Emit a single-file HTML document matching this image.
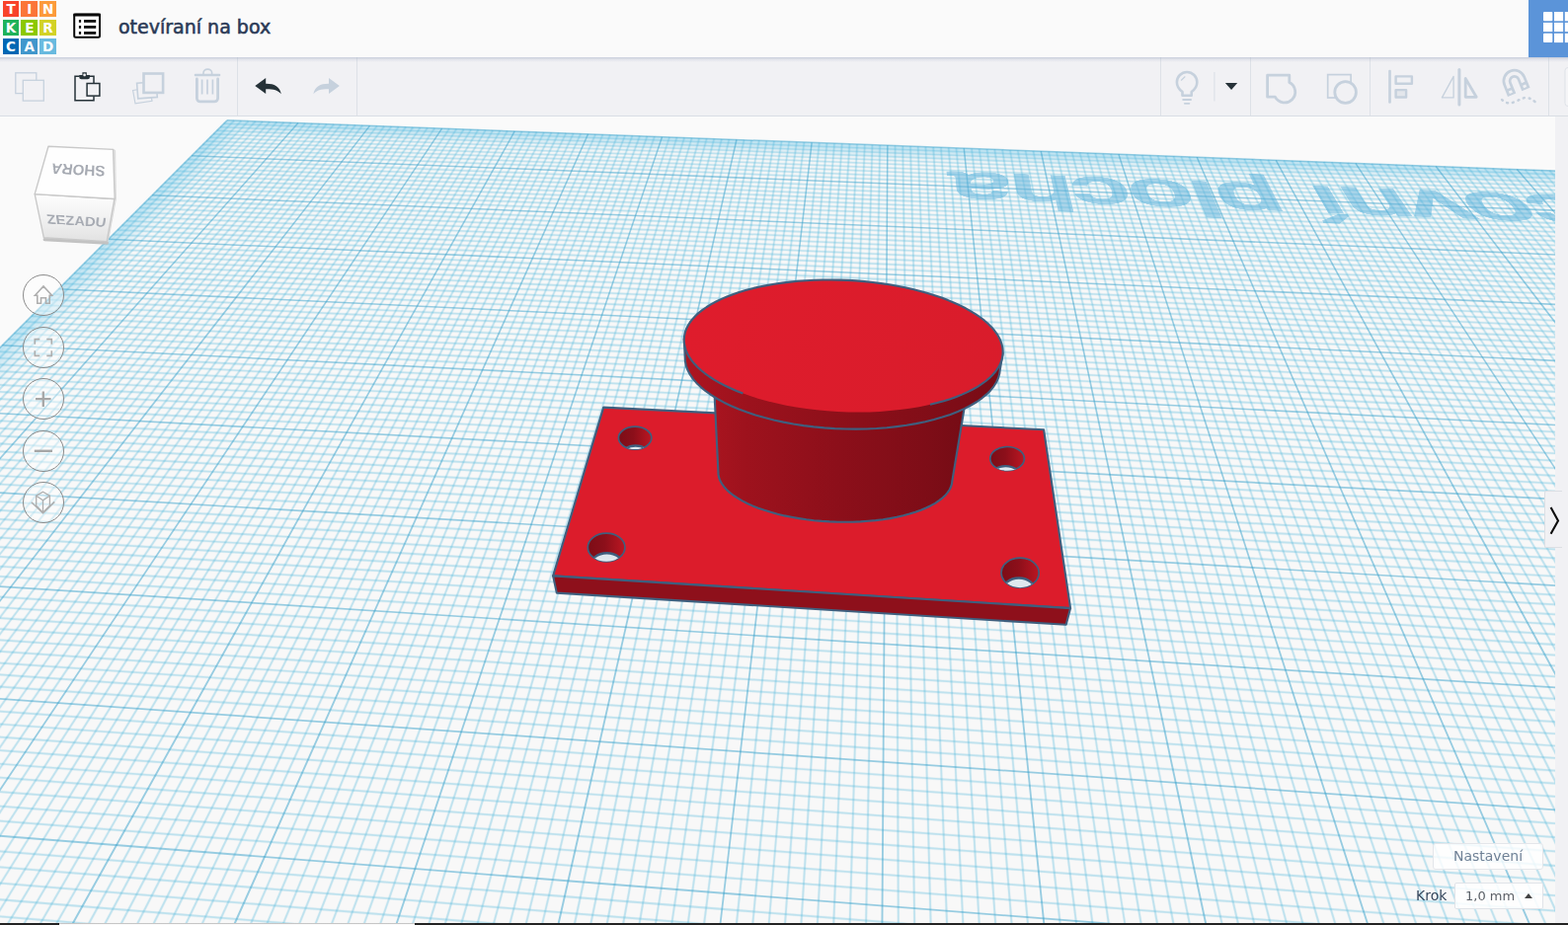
<!DOCTYPE html>
<html lang="cs">
<head>
<meta charset="utf-8">
<title>otevíraní na box</title>
<style>
*{box-sizing:border-box;margin:0;padding:0}
html,body{width:1588px;height:937px;overflow:hidden;background:#fafafa;font-family:"DejaVu Sans","Liberation Sans",sans-serif}
#app{position:relative;width:1588px;height:937px;overflow:hidden;background:#fafafa}
#hdr{position:absolute;left:0;top:0;width:1588px;height:58px;background:#fafafa;z-index:5}
#hdrshadow{position:absolute;left:0;top:58px;width:1588px;height:5px;background:linear-gradient(rgba(160,170,195,.5),rgba(170,180,200,.2) 45%,rgba(190,195,210,0));z-index:6}
#logo{position:absolute;left:3px;top:1px;width:54px;height:54px}
#logo b{position:absolute;width:16.4px;height:16.4px;color:#fff;font:bold 13.5px/16.4px "DejaVu Sans","Liberation Sans",sans-serif;text-align:center}
#title{position:absolute;left:120px;top:15px;font-size:19px;line-height:24px;color:#2b3a56;white-space:nowrap;-webkit-text-stroke:.55px #2b3a56}
#apps{position:absolute;left:1548px;top:0;width:40px;height:58px;background:#5b94d9}
#tb{position:absolute;left:0;top:58px;width:1588px;height:60px;background:#f1f1f4;border-bottom:1px solid #d9dee4;z-index:4}
.sep{position:absolute;top:0;width:1px;height:59px;background:#dde1e7}
#cv{position:absolute;left:0;top:118px;width:1575px;height:817px;background:#fafafa;overflow:hidden}
#rstrip{position:absolute;left:1575px;top:118px;width:13px;height:817px;background:#f1f1f4}
#bot{position:absolute;left:0;top:935px;width:1588px;height:2px;background:#232323}
#bot i{position:absolute;left:60px;top:0;width:360px;height:2px;background:linear-gradient(#c2c2c2 0,#c9c9c9 50%,#fafafa 50%,#fafafa 100%)}
svg{position:absolute;left:0;top:0;overflow:visible}
.nav{position:absolute;left:22.800px;width:42px;height:42px;border-radius:50%;border:1.2px solid #8a8a8a;background:rgba(255,255,255,.4)}
#set{position:absolute;left:1451px;top:854px;width:112px;height:27px;border:1px solid #e4e6ea;border-radius:3px;background:rgba(255,255,255,.8);color:#6f8196;font-size:14px;line-height:24px;text-align:center}
#krok{position:absolute;left:1434px;top:898px;font-size:14px;line-height:18px;color:#34465c}
#step{position:absolute;left:1473px;top:894px;width:90px;height:27px;border:1px solid #e0e3e8;border-radius:2px;background:rgba(255,255,255,.85);color:#5a6470;font-size:13px;line-height:25px;padding-left:10px;color:#5b6067}
#step i{position:absolute;left:70px;top:10px;width:0;height:0;border-left:4.5px solid transparent;border-right:4.5px solid transparent;border-bottom:5px solid #444}
#tab{position:absolute;left:1564px;top:497px;width:18px;height:58px;background:#f1f1f4;border:1px solid #dcdfe4;border-right:none;border-radius:2px 0 0 2px;z-index:3}
#wp{position:absolute;left:0;top:-118px;transform-origin:0 0;font:normal 100px/100px "Liberation Sans",sans-serif;color:#5fb3da;-webkit-text-stroke:4.6px #58b0da;opacity:.5;white-space:nowrap}
.cubetx{position:absolute;left:0;top:0;width:100px;height:100px;transform-origin:0 0;pointer-events:none}
.cubetx span{position:absolute;display:block;width:200px;margin-left:-100px;height:40px;margin-top:-20px;text-align:center;font:bold 31px/40px "Liberation Sans",sans-serif;color:#a6aab2;transform:scaleX(.67);white-space:nowrap}
</style>
</head>
<body>
<div id="app">
<div id="hdr">
  <div id="logo">
    <b style="left:0px;top:0.1px;width:16.1px;height:16.1px;line-height:16.1px;background:#f8432b">T</b><b style="left:18.4px;top:0.1px;width:16.8px;height:16.1px;line-height:16.1px;background:#fb7539">I</b><b style="left:37.3px;top:0.1px;width:16.5px;height:16.1px;line-height:16.1px;background:#fc9a3b">N</b>
    <b style="left:0px;top:18.8px;width:16.1px;height:16.5px;line-height:16.5px;background:#1fb25a">K</b><b style="left:18.4px;top:18.8px;width:16.8px;height:16.5px;line-height:16.5px;background:#8cc800">E</b><b style="left:37.3px;top:18.8px;width:16.5px;height:16.5px;line-height:16.5px;background:#d2d226">R</b>
    <b style="left:0px;top:37.5px;width:16.1px;height:16.2px;line-height:16.2px;background:#0067b4">C</b><b style="left:18.4px;top:37.5px;width:16.8px;height:16.2px;line-height:16.2px;background:#4197cc">A</b><b style="left:37.3px;top:37.5px;width:16.5px;height:16.2px;line-height:16.2px;background:#69badf">D</b>
  </div>
  <svg id="listico" width="40" height="40" viewBox="70 8 40 40" style="left:70px;top:8px">
    <rect x="75.2" y="14.8" width="25.8" height="23" rx="1.5" fill="#fcfcfc" stroke="#0a0a0a" stroke-width="2"/>
    <rect x="74.2" y="13.6" width="27.8" height="3" rx="1" fill="#0a0a0a"/>
    <g fill="#0a0a0a">
      <rect x="79.9" y="20" width="2.2" height="2.8"/><rect x="85" y="20" width="12.2" height="2.8"/>
      <rect x="79.9" y="26" width="2.2" height="2.8"/><rect x="85" y="26" width="12.2" height="2.8"/>
      <rect x="79.9" y="32" width="2.2" height="2.8"/><rect x="85" y="32" width="12.2" height="2.8"/>
    </g>
  </svg>
  <div id="title">otevíraní na box</div>
  <div id="apps">
    <svg width="40" height="58" viewBox="1548 0 40 58">
      <g fill="#fff">
        <rect x="1563" y="12" width="9.3" height="9.3" rx="1"/><rect x="1574" y="12" width="9.1" height="9.3"/><rect x="1584.8" y="12" width="9" height="9.3"/>
        <rect x="1563" y="22.9" width="9.3" height="9.2"/><rect x="1574" y="22.9" width="9.1" height="9.2"/><rect x="1584.8" y="22.9" width="9" height="9.2"/>
        <rect x="1563" y="33.8" width="9.3" height="9.3" rx="1"/><rect x="1574" y="33.8" width="9.1" height="9.3"/><rect x="1584.8" y="33.8" width="9" height="9.3"/>
      </g>
    </svg>
  </div>
</div>
<div id="hdrshadow"></div>
<div id="tb">
  <i class="sep" style="left:240px"></i><i class="sep" style="left:361px"></i>
  <i class="sep" style="left:1175px"></i><i class="sep" style="left:1266px"></i><i class="sep" style="left:1387px"></i><i class="sep" style="left:1568px"></i>
  <svg id="tbico" width="1588" height="60" viewBox="0 58 1588 60">
    <!-- copy (disabled) -->
    <g fill="#f1f1f4" stroke="#c6d1dd" stroke-width="1.3">
      <rect x="15.8" y="73.8" width="21" height="20.8"/>
      <rect x="23.3" y="81.3" width="21" height="20.8"/>
    </g>
    <!-- paste -->
    <g fill="none" stroke="#263238" stroke-width="1.5">
      <path d="M80.5,77.2H76v24.6h19v-4.5M95,84V77.2H90.5"/>
      <path d="M80.200,76h3.200v-2.800h4.400v2.800h3.200v2q0,2.200 -2.200,2.200h-6.400q-2.200,0 -2.200,-2.200z" fill="#263238" stroke="none"/>
      <rect x="84.400" y="74.600" width="2.400" height="2.600" rx=".6" fill="#f1f1f4" stroke="none"/>
      <rect x="88.1" y="84.5" width="12.8" height="12.6" fill="#f1f1f4"/>
    </g>
    <!-- duplicate (disabled) -->
    <g fill="#f1f1f4" stroke="#c6d1dd">
      <path d="M134.6,91.5l17,-2.6l2.4,13.4l-17,2.6z" stroke-width="1.2"/>
      <path d="M138.6,84.3l19.5,-1.5l1.2,15.6l-19.5,1.5z" stroke-width="1.6"/>
      <rect x="145.5" y="74.5" width="19.6" height="19.4" stroke-width="2.6"/>
    </g>
    <!-- trash (disabled) -->
    <g fill="none" stroke="#c6d1dd" stroke-linecap="round">
      <path d="M198,76h24" stroke-width="2.6"/>
      <path d="M206,75v-1.2a4,3.4 0 0 1 8.6,0V75" stroke-width="1.6"/>
      <path d="M199.4,80v19.5a3.4,3.4 0 0 0 3.4,3.4h14.4a3.4,3.4 0 0 0 3.4,-3.4V80" stroke-width="2.8"/>
      <path d="M204.6,80.6v14.8M210,80.6v14.8M215.4,80.6v14.8" stroke-width="1.7" stroke-linecap="butt"/>
    </g>
    <!-- undo -->
    <path d="M258.300,87.100L269.200,79v5.700c8.500,-.1 14.300,2.800 15.600,10.600c-3.200,-4 -8,-5.200 -15.600,-5.100v4.900z" fill="#263238"/>
    <!-- redo (disabled) -->
    <path d="M343.900,87.100L333,79v5.700c-8.500,-.1 -14.300,2.800 -15.600,10.600c3.200,-4 8,-5.200 15.600,-5.100v4.900z" fill="#c6d1dd"/>
    <!-- bulb -->
    <g fill="none" stroke="#c6d1dd" stroke-linecap="round">
      <path d="M1197.5,96.8v-3.8c-3.6,-2.6 -5.6,-5.8 -5.6,-9.8a10.2,10.2 0 0 1 20.4,0c0,4 -2,7.200 -5.600,9.800v3.800z" stroke-width="2.6" stroke-linejoin="round"/>
      <path d="M1198.3,101h7.600" stroke-width="2.2"/>
      <path d="M1199.8,104.800h4.600" stroke-width="1.8"/>
      <path d="M1196.4,81.2l3.6,-3.4" stroke-width="1.2"/>
    </g>
    <rect x="1229.300" y="73" width="1.2" height="29.500" fill="#dde1e7"/>
    <path d="M1240.9,84.100h12.300l-6.150,7z" fill="#263238"/>
    <!-- group -->
    <path d="M1283.600,76.200H1305.800V83.500A10.800,10.800 0 1 1 1291.400,98.200H1283.600Z" fill="none" stroke="#c6d1dd" stroke-width="2.8" stroke-linejoin="round"/>
    <!-- ungroup -->
    <rect x="1344.700" y="75.600" width="23.400" height="23.400" fill="none" stroke="#c6d1dd" stroke-width="1.7"/>
    <circle cx="1362.600" cy="93.500" r="10.800" fill="#f1f1f4" stroke="#c6d1dd" stroke-width="2.800"/>
    <!-- align -->
    <g stroke="#c6d1dd" fill="none">
      <path d="M1407.500,72v31.500" stroke-width="2.6" stroke-linecap="round"/>
      <rect x="1413.600" y="77.400" width="16.300" height="7.400" stroke-width="2.400" stroke-linejoin="round"/>
      <rect x="1413.600" y="91.100" width="10.500" height="7.400" stroke-width="2.400" fill="#e3e6eb" stroke-linejoin="round"/>
    </g>
    <!-- mirror -->
    <g stroke="#c6d1dd" fill="none" stroke-linejoin="round">
      <path d="M1477.900,70.500v35.500" stroke-width="3" stroke-linecap="round"/>
      <path d="M1460.400,98.900h11.700v-21.500z" stroke-width="1.300"/>
      <path d="M1484.200,79.500v18.800h11z" stroke-width="2.800"/>
    </g>
    <!-- magnet -->
    <g transform="translate(1533.7,82.05) rotate(-22)" fill="none" stroke-linecap="butt">
      <path d="M-7.7,12.2V0A7.7,7.7 0 0 1 7.7,0V12.2" stroke="#c6d1dd" stroke-width="8.9"/>
      <path d="M-7.7,4.7V0A7.7,7.7 0 0 1 7.7,0V4.7" stroke="#f1f1f4" stroke-width="3.5"/>
      <path d="M-7.7,7.4V10.2M7.7,7.4V10.2" stroke="#f1f1f4" stroke-width="3.3"/>
    </g>
    <path d="M1521.1,101C1525,105 1529,105.2 1534,103.2S1543,98.4 1546.500,99S1551.500,100.800 1554.600,103" fill="none" stroke="#c6d1dd" stroke-width="2.500" stroke-dasharray="1 4.900" stroke-linecap="round"/>
    <rect x="1585" y="68.500" width="12" height="39" rx="3" fill="#f5f5f7" stroke="#dde1e7" stroke-width="1"/>
  </svg>
</div>
<div id="cv">
<svg id="grid" width="1575" height="817" viewBox="0 118 1575 817">
<path d="M230.0,121.9L1786.6,181.1L3332.4,1465.6L-723.8,1076.8Z" fill="#f8f8f8"/>
<g fill="#5cc0e8"><path d="M230.0,121.9L232.0,123.8L-715.1,1077.6L-723.8,1076.8ZM230.0,121.9L1786.6,181.1L1789.2,183.2L232.0,123.8Z" fill-opacity="0.386"/><path d="M232.0,123.8L234.0,125.7L-706.5,1078.4L-715.1,1077.6ZM232.0,123.8L1789.2,183.2L1791.7,185.4L234.0,125.7Z" fill-opacity="0.321"/><path d="M234.0,125.7L236.0,127.7L-697.9,1079.2L-706.5,1078.4ZM234.0,125.7L1791.7,185.4L1794.3,187.5L236.0,127.7Z" fill-opacity="0.258"/><path d="M236.0,127.7L238.0,129.7L-689.2,1080.1L-697.9,1079.2ZM236.0,127.7L1794.3,187.5L1796.9,189.7L238.0,129.7Z" fill-opacity="0.199"/><path d="M238.0,129.7L240.0,131.7L-680.6,1080.9L-689.2,1080.1ZM238.0,129.7L1796.9,189.7L1799.5,191.8L240.0,131.7Z" fill-opacity="0.143"/><path d="M240.0,131.7L242.1,133.7L-671.9,1081.7L-680.6,1080.9ZM240.0,131.7L1799.5,191.8L1802.1,194.0L242.1,133.7Z" fill-opacity="0.093"/><path d="M242.1,133.7L244.1,135.7L-663.3,1082.6L-671.9,1081.7ZM242.1,133.7L1802.1,194.0L1804.8,196.2L244.1,135.7Z" fill-opacity="0.048"/><path d="M244.1,135.7L246.2,137.7L-654.6,1083.4L-663.3,1082.6ZM244.1,135.7L1804.8,196.2L1807.4,198.4L246.2,137.7Z" fill-opacity="0.011"/></g>
<g fill="#4fb8dc" fill-opacity=".08">
<path d="M236.1,121.1L-566.8,933.9L-708.4,1077.3L-706.3,1079.4L-564.7,936.1L238.2,123.2ZM243.3,121.4L-550.4,934.0L-692.0,1078.9L-689.8,1081.0L-548.3,936.0L245.4,123.5ZM250.4,121.6L-534.0,934.0L-675.5,1080.4L-673.3,1082.5L-531.9,936.0L252.6,123.7ZM257.6,121.9L-517.6,934.0L-659.0,1082.0L-656.8,1084.1L-515.5,936.0L259.8,124.0ZM264.8,122.2L-501.2,934.0L-642.4,1083.6L-640.3,1085.7L-499.0,936.0L267.0,124.3ZM272.0,122.5L-484.8,934.0L-625.9,1085.2L-623.7,1087.3L-482.6,936.0L274.2,124.5ZM279.2,122.8L-468.4,934.0L-609.3,1086.8L-607.1,1088.9L-466.2,936.0L281.4,124.8ZM286.4,123.0L-452.0,934.0L-592.6,1088.4L-590.4,1090.4L-449.8,936.0L288.6,125.1ZM293.6,123.3L-435.6,934.0L-576.0,1090.0L-573.7,1092.0L-433.4,936.0L295.9,125.3ZM308.1,123.9L-402.8,934.0L-542.6,1093.2L-540.3,1095.2L-400.6,936.0L310.3,125.9ZM315.3,124.2L-386.4,934.0L-525.8,1094.9L-523.5,1096.8L-384.2,936.0L317.5,126.1ZM322.5,124.4L-370.0,934.0L-509.0,1096.5L-506.7,1098.4L-367.7,936.0L324.8,126.4ZM329.8,124.7L-353.6,934.0L-492.2,1098.1L-489.9,1100.0L-351.3,936.0L332.0,126.7ZM337.0,125.0L-337.2,934.0L-475.3,1099.7L-473.0,1101.6L-334.9,936.0L339.3,126.9ZM344.2,125.3L-320.8,934.0L-458.4,1101.4L-456.1,1103.3L-318.5,936.0L346.6,127.2ZM351.5,125.6L-304.4,934.1L-441.5,1103.0L-439.2,1104.9L-302.1,935.9L353.8,127.5ZM358.8,125.9L-288.0,934.1L-424.5,1104.6L-422.2,1106.5L-285.7,935.9L361.1,127.7ZM366.0,126.2L-271.6,934.1L-407.5,1106.3L-405.2,1108.1L-269.3,935.9L368.4,128.0ZM380.6,126.7L-238.8,934.1L-373.5,1109.5L-371.1,1111.4L-236.5,935.9L383.0,128.5ZM387.9,127.0L-222.5,934.1L-356.4,1111.2L-354.0,1113.0L-220.1,935.9L390.3,128.8ZM395.2,127.3L-206.1,934.1L-339.2,1112.8L-336.8,1114.6L-203.6,935.9L397.6,129.1ZM402.4,127.6L-189.7,934.1L-322.1,1114.5L-319.7,1116.3L-187.2,935.9L404.9,129.4ZM409.7,127.9L-173.3,934.1L-304.9,1116.2L-302.5,1117.9L-170.8,935.9L412.2,129.6ZM417.1,128.2L-156.9,934.1L-287.7,1117.8L-285.2,1119.6L-154.4,935.9L419.5,129.9ZM424.4,128.4L-140.5,934.1L-270.4,1119.5L-268.0,1121.2L-138.0,935.9L426.8,130.2ZM431.7,128.7L-124.1,934.1L-253.1,1121.1L-250.6,1122.8L-121.6,935.9L434.2,130.4ZM439.0,129.0L-107.7,934.2L-235.8,1122.8L-233.3,1124.5L-105.2,935.8L441.5,130.7ZM453.7,129.6L-74.9,934.2L-201.0,1126.2L-198.5,1127.8L-72.4,935.8L456.2,131.2ZM461.0,129.9L-58.5,934.2L-183.6,1127.8L-181.1,1129.5L-56.0,935.8L463.5,131.5ZM468.4,130.2L-42.1,934.2L-166.1,1129.5L-163.6,1131.1L-39.6,935.8L470.9,131.8ZM475.7,130.5L-25.7,934.2L-148.6,1131.2L-146.1,1132.8L-23.2,935.8L478.3,132.1ZM483.1,130.8L-9.3,934.2L-131.1,1132.9L-128.5,1134.5L-6.8,935.8L485.6,132.3ZM490.5,131.1L7.1,934.2L-113.5,1134.6L-111.0,1136.2L9.6,935.8L493.0,132.6ZM497.8,131.3L23.5,934.2L-95.9,1136.3L-93.4,1137.8L26.0,935.8L500.4,132.9ZM505.2,131.6L39.8,934.2L-78.3,1138.0L-75.7,1139.5L42.4,935.8L507.8,133.1ZM512.6,131.9L56.2,934.3L-60.6,1139.7L-58.0,1141.2L58.8,935.7L515.2,133.4ZM527.4,132.5L89.0,934.3L-25.2,1143.1L-22.5,1144.6L91.7,935.7L530.0,134.0ZM534.8,132.8L105.4,934.3L-7.4,1144.9L-4.7,1146.3L108.1,935.7L537.4,134.2ZM542.2,133.1L121.8,934.3L10.4,1146.6L13.1,1148.0L124.5,935.7L544.8,134.5ZM549.6,133.4L138.2,934.3L28.3,1148.3L30.9,1149.7L140.9,935.7L552.3,134.8ZM557.0,133.7L154.6,934.3L46.2,1150.0L48.8,1151.4L157.3,935.7L559.7,135.0ZM564.4,134.0L171.0,934.3L64.1,1151.8L66.8,1153.1L173.7,935.7L567.1,135.3ZM571.9,134.3L187.4,934.4L82.0,1153.5L84.7,1154.8L190.1,935.6L574.6,135.6ZM579.3,134.6L203.7,934.4L100.0,1155.2L102.8,1156.5L206.5,935.6L582.0,135.8ZM586.8,134.9L220.1,934.4L118.1,1157.0L120.8,1158.2L222.9,935.6L589.5,136.1ZM601.7,135.5L252.9,934.4L154.2,1160.5L157.0,1161.7L255.7,935.6L604.4,136.7ZM609.1,135.8L269.3,934.4L172.4,1162.2L175.1,1163.4L272.1,935.6L611.9,136.9ZM616.6,136.1L285.7,934.4L190.5,1164.0L193.3,1165.1L288.5,935.6L619.4,137.2ZM624.1,136.4L302.1,934.4L208.8,1165.7L211.5,1166.9L304.9,935.6L626.9,137.5ZM631.6,136.7L318.5,934.5L227.0,1167.5L229.8,1168.6L321.3,935.5L634.3,137.7ZM639.0,137.0L334.9,934.5L245.3,1169.3L248.1,1170.3L337.7,935.5L641.8,138.0ZM646.5,137.2L351.2,934.5L263.6,1171.0L266.4,1172.1L354.1,935.5L649.4,138.3ZM654.0,137.5L367.6,934.5L282.0,1172.8L284.8,1173.8L370.5,935.5L656.9,138.6ZM661.5,137.8L384.0,934.5L300.4,1174.6L303.2,1175.6L386.8,935.5L664.4,138.8ZM676.6,138.5L416.8,934.5L337.3,1178.2L340.1,1179.1L419.6,935.5L679.4,139.4ZM684.1,138.8L433.2,934.5L355.8,1179.9L358.7,1180.8L436.0,935.5L687.0,139.7ZM691.6,139.1L449.6,934.6L374.4,1181.7L377.2,1182.6L452.4,935.4L694.5,139.9ZM699.2,139.4L465.9,934.6L392.9,1183.5L395.8,1184.4L468.8,935.4L702.0,140.2ZM706.7,139.7L482.3,934.6L411.6,1185.3L414.4,1186.1L485.2,935.4L709.6,140.5ZM714.3,140.0L498.7,934.6L430.2,1187.1L433.1,1187.9L501.6,935.4L717.2,140.7ZM721.8,140.3L515.1,934.6L448.9,1188.9L451.8,1189.7L518.0,935.4L724.7,141.0ZM729.4,140.6L531.5,934.6L467.7,1190.8L470.6,1191.5L534.4,935.4L732.3,141.3ZM736.9,140.9L547.9,934.7L486.4,1192.6L489.4,1193.3L550.8,935.3L739.9,141.6ZM752.1,141.5L580.6,934.7L524.1,1196.2L527.0,1196.9L583.6,935.3L755.0,142.1ZM759.7,141.8L597.0,934.7L543.0,1198.0L545.9,1198.6L600.0,935.3L762.6,142.4ZM767.3,142.1L613.4,934.7L561.9,1199.9L564.9,1200.4L616.4,935.3L770.2,142.7ZM774.9,142.4L629.8,934.7L580.9,1201.7L583.9,1202.3L632.8,935.3L777.8,142.9ZM782.5,142.7L646.2,934.7L599.9,1203.5L602.9,1204.1L649.1,935.3L785.4,143.2ZM790.1,143.0L662.6,934.8L619.0,1205.4L621.9,1205.9L665.5,935.2L793.1,143.5ZM797.7,143.3L679.0,934.8L638.1,1207.2L641.0,1207.7L681.9,935.2L800.7,143.8ZM805.3,143.6L695.3,934.8L657.2,1209.1L660.2,1209.5L698.3,935.2L808.3,144.0ZM813.0,143.9L711.7,934.8L676.4,1210.9L679.3,1211.3L714.7,935.2L816.0,144.3ZM828.3,144.5L744.5,934.8L714.8,1214.7L717.8,1215.0L747.5,935.2L831.2,144.9ZM835.9,144.8L760.9,934.9L734.1,1216.5L737.1,1216.8L763.9,935.1L838.9,145.1ZM843.6,145.2L777.3,934.9L753.5,1218.4L756.4,1218.6L780.2,935.1L846.6,145.4ZM851.2,145.5L793.6,934.9L772.8,1220.3L775.8,1220.5L796.6,935.1L854.2,145.7ZM858.9,145.8L810.0,934.9L792.2,1222.1L795.2,1222.3L813.0,935.1L861.9,146.0ZM866.6,146.1L826.4,934.9L811.7,1224.0L814.7,1224.2L829.4,935.1L869.6,146.2ZM874.3,146.4L842.8,934.9L831.2,1225.9L834.2,1226.0L845.8,935.1L877.3,146.5ZM882.0,146.7L859.2,935.0L850.7,1227.8L853.7,1227.9L862.2,935.0L884.9,146.8ZM889.6,147.0L875.6,935.0L870.3,1229.7L873.3,1229.8L878.6,935.0L892.6,147.1ZM905.1,147.6L908.3,935.0L909.6,1233.5L912.6,1233.5L911.3,935.0L908.1,147.6ZM912.8,147.9L924.7,935.0L929.3,1235.4L932.3,1235.4L927.7,935.0L915.8,147.9ZM920.5,148.2L941.1,935.0L949.0,1237.3L952.0,1237.2L944.1,935.0L923.5,148.2ZM928.2,148.6L957.5,935.1L968.8,1239.2L971.8,1239.1L960.5,934.9L931.2,148.4ZM936.0,148.9L973.9,935.1L988.6,1241.1L991.6,1241.0L976.8,934.9L939.0,148.7ZM943.7,149.2L990.2,935.1L1008.5,1243.1L1011.5,1242.9L993.2,934.9L946.7,149.0ZM951.5,149.5L1006.6,935.1L1028.4,1245.0L1031.4,1244.8L1009.6,934.9L954.4,149.3ZM959.2,149.8L1023.0,935.1L1048.3,1246.9L1051.3,1246.7L1026.0,934.9L962.2,149.6ZM967.0,150.1L1039.4,935.1L1068.3,1248.8L1071.3,1248.6L1042.4,934.9L970.0,149.8ZM982.5,150.7L1072.1,935.2L1108.4,1252.7L1111.4,1252.4L1075.1,934.8L985.5,150.4ZM990.3,151.0L1088.5,935.2L1128.5,1254.7L1131.5,1254.3L1091.5,934.8L993.3,150.7ZM998.1,151.4L1104.9,935.2L1148.7,1256.6L1151.7,1256.2L1107.9,934.8L1001.1,151.0ZM1005.9,151.7L1121.3,935.2L1168.9,1258.6L1171.9,1258.1L1124.3,934.8L1008.8,151.2ZM1013.7,152.0L1137.7,935.2L1189.2,1260.5L1192.1,1260.1L1140.6,934.8L1016.6,151.5ZM1021.5,152.3L1154.0,935.3L1209.5,1262.5L1212.4,1262.0L1157.0,934.7L1024.4,151.8ZM1029.3,152.6L1170.4,935.3L1229.8,1264.5L1232.7,1263.9L1173.4,934.7L1032.3,152.1ZM1037.1,152.9L1186.8,935.3L1250.2,1266.4L1253.1,1265.9L1189.8,934.7L1040.1,152.4ZM1044.9,153.2L1203.2,935.3L1270.6,1268.4L1273.5,1267.8L1206.1,934.7L1047.9,152.6ZM1060.6,153.9L1236.0,935.3L1311.6,1272.4L1314.5,1271.7L1238.9,934.7L1063.6,153.2ZM1068.5,154.2L1252.3,935.3L1332.1,1274.3L1335.0,1273.7L1255.3,934.7L1071.4,153.5ZM1076.3,154.5L1268.7,935.4L1352.7,1276.3L1355.6,1275.6L1271.6,934.6L1079.2,153.8ZM1084.2,154.8L1285.1,935.4L1373.4,1278.3L1376.3,1277.6L1288.0,934.6L1087.1,154.1ZM1092.1,155.1L1301.5,935.4L1394.1,1280.3L1396.9,1279.5L1304.4,934.6L1095.0,154.3ZM1099.9,155.4L1317.9,935.4L1414.8,1282.3L1417.7,1281.5L1320.7,934.6L1102.8,154.6ZM1107.8,155.8L1334.2,935.4L1435.6,1284.3L1438.4,1283.5L1337.1,934.6L1110.7,154.9ZM1115.7,156.1L1350.6,935.4L1456.4,1286.3L1459.3,1285.5L1353.5,934.6L1118.6,155.2ZM1123.6,156.4L1367.0,935.4L1477.2,1288.4L1480.1,1287.5L1369.9,934.6L1126.5,155.5ZM1139.4,157.0L1399.7,935.5L1519.1,1292.4L1522.0,1291.4L1402.6,934.5L1142.2,156.1ZM1147.3,157.3L1416.1,935.5L1540.1,1294.4L1543.0,1293.4L1419.0,934.5L1150.1,156.3ZM1155.2,157.6L1432.5,935.5L1561.2,1296.5L1564.0,1295.5L1435.3,934.5L1158.1,156.6ZM1163.2,158.0L1448.9,935.5L1582.3,1298.5L1585.1,1297.5L1451.7,934.5L1166.0,156.9ZM1171.1,158.3L1465.3,935.5L1603.4,1300.5L1606.2,1299.5L1468.1,934.5L1173.9,157.2ZM1179.0,158.6L1481.6,935.5L1624.6,1302.6L1627.4,1301.5L1484.4,934.5L1181.8,157.5ZM1187.0,158.9L1498.0,935.6L1645.8,1304.6L1648.6,1303.5L1500.8,934.4L1189.8,157.8ZM1194.9,159.2L1514.4,935.6L1667.1,1306.7L1669.9,1305.5L1517.2,934.4L1197.7,158.1ZM1202.9,159.5L1530.8,935.6L1688.4,1308.7L1691.2,1307.6L1533.5,934.4L1205.7,158.4ZM1218.8,160.2L1563.5,935.6L1731.2,1312.9L1734.0,1311.6L1566.3,934.4L1221.6,159.0ZM1226.8,160.5L1579.9,935.6L1752.7,1314.9L1755.4,1313.7L1582.6,934.4L1229.6,159.2ZM1234.8,160.8L1596.3,935.6L1774.2,1317.0L1776.9,1315.7L1599.0,934.4L1237.5,159.5ZM1242.8,161.1L1612.7,935.6L1795.8,1319.1L1798.5,1317.8L1615.4,934.4L1245.5,159.8ZM1250.8,161.4L1629.0,935.7L1817.4,1321.2L1820.1,1319.9L1631.7,934.3L1253.5,160.1ZM1258.8,161.8L1645.4,935.7L1839.0,1323.3L1841.7,1321.9L1648.1,934.3L1261.5,160.4ZM1266.8,162.1L1661.8,935.7L1860.7,1325.3L1863.4,1324.0L1664.5,934.3L1269.5,160.7ZM1274.9,162.4L1678.2,935.7L1882.5,1327.4L1885.1,1326.1L1680.8,934.3L1277.5,161.0ZM1282.9,162.7L1694.5,935.7L1904.3,1329.5L1906.9,1328.1L1697.2,934.3L1285.5,161.3ZM1299.0,163.3L1727.3,935.7L1948.0,1333.8L1950.6,1332.3L1729.9,934.3L1301.6,161.9ZM1307.0,163.7L1743.7,935.7L1970.0,1335.9L1972.6,1334.4L1746.3,934.3L1309.6,162.2ZM1315.1,164.0L1760.0,935.7L1991.9,1338.0L1994.5,1336.5L1762.6,934.3L1317.7,162.5ZM1323.1,164.3L1776.4,935.8L2014.0,1340.1L2016.6,1338.6L1779.0,934.2L1325.7,162.8ZM1331.2,164.6L1792.8,935.8L2036.1,1342.2L2038.6,1340.7L1795.4,934.2L1333.8,163.1ZM1339.3,164.9L1809.2,935.8L2058.2,1344.4L2060.8,1342.8L1811.7,934.2L1341.8,163.4ZM1347.4,165.2L1825.5,935.8L2080.4,1346.5L2082.9,1344.9L1828.1,934.2L1349.9,163.7ZM1355.4,165.6L1841.9,935.8L2102.6,1348.7L2105.2,1347.1L1844.4,934.2L1358.0,164.0ZM1363.5,165.9L1858.3,935.8L2124.9,1350.8L2127.4,1349.2L1860.8,934.2L1366.1,164.3ZM1379.8,166.5L1891.0,935.8L2169.6,1355.1L2172.1,1353.4L1893.5,934.2L1382.3,164.9ZM1387.9,166.8L1907.4,935.8L2192.1,1357.3L2194.6,1355.6L1909.9,934.2L1390.4,165.2ZM1396.0,167.1L1923.8,935.8L2214.6,1359.4L2217.0,1357.7L1926.2,934.2L1398.5,165.5ZM1404.1,167.5L1940.1,935.9L2237.1,1361.6L2239.6,1359.9L1942.6,934.1L1406.6,165.8ZM1412.3,167.8L1956.5,935.9L2259.7,1363.8L2262.1,1362.0L1958.9,934.1L1414.7,166.1ZM1420.4,168.1L1972.9,935.9L2282.3,1366.0L2284.8,1364.2L1975.3,934.1L1422.8,166.4ZM1428.6,168.4L1989.2,935.9L2305.0,1368.1L2307.5,1366.4L1991.7,934.1L1431.0,166.7ZM1436.7,168.7L2005.6,935.9L2327.8,1370.3L2330.2,1368.5L2008.0,934.1L1439.1,167.0ZM1444.9,169.1L2022.0,935.9L2350.6,1372.5L2353.0,1370.7L2024.4,934.1L1447.3,167.3ZM1461.2,169.7L2054.7,935.9L2396.3,1376.9L2398.7,1375.1L2057.1,934.1L1463.6,167.9ZM1469.4,170.0L2071.1,935.9L2419.2,1379.1L2421.6,1377.3L2073.4,934.1L1471.8,168.2ZM1477.6,170.3L2087.5,935.9L2442.2,1381.3L2444.6,1379.5L2089.8,934.1L1480.0,168.5ZM1485.8,170.7L2103.8,935.9L2465.3,1383.6L2467.6,1381.7L2106.2,934.1L1488.1,168.8ZM1494.0,171.0L2120.2,936.0L2488.4,1385.8L2490.7,1383.9L2122.5,934.0L1496.3,169.1ZM1502.2,171.3L2136.6,936.0L2511.6,1388.0L2513.9,1386.1L2138.9,934.0L1504.5,169.4ZM1510.4,171.6L2152.9,936.0L2534.8,1390.2L2537.1,1388.3L2155.2,934.0L1512.7,169.7ZM1518.7,171.9L2169.3,936.0L2558.0,1392.5L2560.3,1390.5L2171.6,934.0L1521.0,170.0ZM1526.9,172.3L2185.7,936.0L2581.3,1394.7L2583.6,1392.8L2187.9,934.0L1529.2,170.3ZM1543.4,172.9L2218.4,936.0L2628.1,1399.2L2630.4,1397.2L2220.6,934.0L1545.6,170.9ZM1551.7,173.2L2234.8,936.0L2651.6,1401.5L2653.8,1399.5L2237.0,934.0L1553.9,171.2ZM1559.9,173.5L2251.1,936.0L2675.1,1403.7L2677.4,1401.7L2253.3,934.0L1562.1,171.5ZM1568.2,173.9L2267.5,936.0L2698.7,1406.0L2700.9,1404.0L2269.7,934.0L1570.4,171.8ZM1576.5,174.2L2283.9,936.0L2722.4,1408.3L2724.6,1406.2L2286.1,934.0L1578.7,172.1Z"/>
<path d="M226.5,126.8L1791.4,186.7L1791.5,183.7L226.6,123.8ZM223.1,130.2L1796.4,190.8L1796.5,187.8L223.2,127.2ZM219.6,133.7L1801.3,194.9L1801.5,191.9L219.7,130.7ZM216.0,137.3L1806.4,199.1L1806.5,196.1L216.2,134.3ZM212.5,140.8L1811.5,203.3L1811.6,200.3L212.6,137.8ZM208.9,144.4L1816.6,207.6L1816.7,204.6L209.0,141.4ZM205.2,148.1L1821.8,211.9L1821.9,208.9L205.4,145.1ZM201.6,151.8L1827.1,216.3L1827.2,213.3L201.7,148.8ZM197.9,155.5L1832.4,220.7L1832.5,217.7L198.0,152.5ZM190.3,163.0L1843.3,229.8L1843.4,226.8L190.4,160.0ZM186.5,166.9L1848.8,234.3L1848.9,231.3L186.6,163.9ZM182.6,170.8L1854.4,239.0L1854.5,236.0L182.7,167.8ZM178.7,174.7L1860.0,243.7L1860.1,240.7L178.8,171.7ZM174.7,178.7L1865.7,248.4L1865.9,245.4L174.8,175.7ZM170.7,182.7L1871.5,253.2L1871.7,250.2L170.8,179.7ZM166.6,186.7L1877.4,258.1L1877.5,255.1L166.8,183.7ZM162.5,190.8L1883.3,263.0L1883.4,260.0L162.7,187.8ZM158.4,195.0L1889.3,268.0L1889.4,265.0L158.5,192.0ZM150.0,203.4L1901.5,278.2L1901.7,275.2L150.1,200.4ZM145.7,207.7L1907.8,283.3L1907.9,280.4L145.8,204.7ZM141.4,212.0L1914.1,288.6L1914.2,285.6L141.5,209.0ZM137.0,216.4L1920.5,293.9L1920.6,290.9L137.1,213.4ZM132.6,220.9L1926.9,299.3L1927.1,296.3L132.7,217.9ZM128.1,225.3L1933.5,304.7L1933.6,301.7L128.2,222.4ZM123.5,229.9L1940.1,310.2L1940.2,307.2L123.7,226.9ZM118.9,234.5L1946.8,315.8L1947.0,312.8L119.1,231.5ZM114.3,239.1L1953.6,321.5L1953.8,318.5L114.4,236.1ZM104.8,248.6L1967.5,333.0L1967.6,330.0L105.0,245.6ZM100.0,253.4L1974.6,338.9L1974.7,335.9L100.2,250.4ZM95.1,258.3L1981.8,344.8L1981.9,341.8L95.3,255.3ZM90.2,263.2L1989.0,350.9L1989.2,347.9L90.4,260.2ZM85.2,268.2L1996.4,357.0L1996.5,354.0L85.4,265.2ZM80.2,273.3L2003.9,363.2L2004.0,360.2L80.3,270.3ZM75.1,278.4L2011.5,369.5L2011.6,366.5L75.2,275.4ZM69.9,283.6L2019.1,375.9L2019.3,372.9L70.0,280.6ZM64.6,288.9L2026.9,382.4L2027.1,379.4L64.8,285.9ZM53.9,299.6L2042.8,395.6L2043.0,392.6L54.1,296.6ZM48.5,305.0L2050.9,402.3L2051.1,399.3L48.6,302.0ZM43.0,310.5L2059.2,409.2L2059.3,406.2L43.1,307.5ZM37.4,316.1L2067.5,416.1L2067.7,413.1L37.5,313.1ZM31.7,321.8L2076.0,423.2L2076.2,420.2L31.9,318.8ZM26.0,327.6L2084.6,430.3L2084.8,427.3L26.1,324.6ZM20.2,333.4L2093.4,437.6L2093.5,434.6L20.3,330.4ZM14.3,339.3L2102.2,444.9L2102.4,441.9L14.4,336.3ZM8.3,345.3L2111.2,452.4L2111.4,449.4L8.4,342.3ZM-3.9,357.5L2129.6,467.7L2129.8,464.7L-3.7,354.5ZM-10.1,363.7L2139.0,475.5L2139.2,472.5L-10.0,360.7ZM-16.4,370.0L2148.6,483.5L2148.7,480.5L-16.3,367.0ZM-22.8,376.4L2158.3,491.5L2158.4,488.5L-22.7,373.4ZM-29.3,382.9L2168.1,499.7L2168.3,496.7L-29.1,379.9ZM-35.9,389.5L2178.2,508.1L2178.3,505.1L-35.7,386.5ZM-42.5,396.1L2188.3,516.5L2188.5,513.5L-42.4,393.1ZM-49.3,402.9L2198.7,525.1L2198.8,522.1L-49.1,399.9ZM-56.2,409.8L2209.2,533.8L2209.3,530.8L-56.0,406.8ZM-70.2,423.8L2230.7,551.7L2230.9,548.7L-70.0,420.8ZM-77.3,431.0L2241.7,560.9L2241.9,557.9L-77.2,428.0ZM-84.6,438.3L2253.0,570.2L2253.1,567.2L-84.4,435.3ZM-92.0,445.6L2264.4,579.7L2264.5,576.7L-91.8,442.7ZM-99.5,453.1L2276.0,589.3L2276.2,586.3L-99.3,450.2ZM-107.1,460.8L2287.8,599.2L2288.0,596.2L-106.9,457.8ZM-114.8,468.5L2299.8,609.1L2300.0,606.1L-114.6,465.5ZM-122.6,476.3L2312.0,619.3L2312.2,616.3L-122.5,473.3ZM-130.6,484.3L2324.4,629.6L2324.6,626.6L-130.4,481.3ZM-146.9,500.6L2350.0,650.8L2350.2,647.8L-146.7,497.6ZM-155.2,509.0L2363.1,661.7L2363.3,658.8L-155.1,506.0ZM-163.7,517.5L2376.5,672.8L2376.6,669.9L-163.5,514.5ZM-172.3,526.1L2390.1,684.2L2390.2,681.2L-172.1,523.1ZM-181.1,534.8L2403.9,695.7L2404.1,692.7L-180.9,531.8ZM-190.0,543.7L2418.0,707.4L2418.2,704.4L-189.8,540.7ZM-199.0,552.8L2432.4,719.4L2432.6,716.4L-198.8,549.8ZM-208.2,562.0L2447.1,731.5L2447.3,728.5L-208.0,559.0ZM-217.6,571.4L2462.0,744.0L2462.2,741.0L-217.4,568.4ZM-236.7,590.6L2492.8,769.5L2493.0,766.5L-236.5,587.6ZM-246.6,600.4L2508.7,782.7L2508.9,779.7L-246.4,597.4ZM-256.6,610.4L2524.8,796.2L2525.0,793.2L-256.4,607.4ZM-266.8,620.6L2541.3,809.9L2541.5,806.9L-266.6,617.6ZM-277.1,631.0L2558.2,823.9L2558.4,820.9L-276.9,628.0ZM-287.7,641.6L2575.4,838.1L2575.6,835.1L-287.5,638.6ZM-298.4,652.3L2592.9,852.7L2593.1,849.7L-298.2,649.3ZM-309.4,663.3L2610.8,867.6L2611.0,864.6L-309.1,660.3ZM-320.5,674.4L2629.1,882.8L2629.4,879.8L-320.3,671.4ZM-343.4,697.3L2667.0,914.3L2667.2,911.3L-343.2,694.3ZM-355.2,709.1L2686.5,930.5L2686.7,927.5L-354.9,706.1ZM-367.2,721.1L2562.4,936.5L2706.5,947.1L2706.7,944.1L2562.6,933.5L-366.9,718.1ZM-379.4,733.4L2355.8,936.5L2726.9,964.1L2727.1,961.1L2356.0,933.5L-379.2,730.4ZM-391.9,745.8L2149.0,936.5L2747.8,981.4L2748.0,978.4L2149.3,933.5L-391.6,742.8ZM-404.6,758.6L1942.3,936.5L2769.2,999.2L2769.4,996.2L1942.5,933.5L-404.3,755.6ZM-417.5,771.5L1735.5,936.5L2791.0,1017.4L2791.3,1014.4L1735.7,933.5L-417.3,768.5ZM-430.7,784.8L1528.6,936.5L2813.4,1036.0L2813.7,1033.0L1528.9,933.5L-430.5,781.8ZM-444.2,798.3L1321.7,936.5L2836.4,1055.0L2836.6,1052.1L1322.0,933.5L-444.0,795.3ZM-472.0,826.1L907.8,936.5L2883.9,1094.6L2884.2,1091.6L908.0,933.5L-471.8,823.1ZM-486.4,840.5L700.8,936.5L2908.6,1115.1L2908.9,1112.1L701.0,933.5L-486.1,837.5ZM-501.0,855.1L493.7,936.5L2933.9,1136.1L2934.2,1133.1L493.9,933.5L-500.8,852.1ZM-516.0,870.1L286.6,936.5L2959.9,1157.7L2960.1,1154.7L286.8,933.5L-515.7,867.1ZM-531.3,885.4L79.4,936.5L2986.5,1179.8L2986.7,1176.8L79.6,933.5L-531.0,882.4ZM-546.9,901.0L-127.8,936.5L3013.8,1202.5L3014.0,1199.5L-127.6,933.5L-546.6,898.0ZM-562.8,917.0L-335.1,936.5L3041.8,1225.8L3042.1,1222.8L-334.8,933.5L-562.6,914.0ZM-579.1,933.3L-542.4,936.5L3070.6,1249.7L3070.9,1246.7L-542.1,933.5L-578.9,930.3ZM-595.8,950.0L3100.2,1274.3L3100.5,1271.3L-595.5,947.0ZM-630.3,984.5L3161.8,1325.5L3162.1,1322.5L-630.0,981.5ZM-648.1,1002.4L3194.0,1352.2L3194.3,1349.2L-647.9,999.4ZM-666.4,1020.7L3227.1,1379.7L3227.3,1376.7L-666.1,1017.7ZM-685.1,1039.4L3261.1,1408.0L3261.4,1405.0L-684.8,1036.4ZM-704.3,1058.6L3296.1,1437.1L3296.4,1434.1L-704.0,1055.6ZM-723.9,1078.2L3332.2,1467.1L3332.5,1464.1L-723.6,1075.3Z"/>
</g>
<g fill="#4fb8dc" fill-opacity=".27">
<path d="M236.6,121.6L-566.4,934.4L-708.0,1077.7L-706.7,1079.0L-565.1,935.6L237.7,122.7ZM243.8,121.9L-550.0,934.4L-691.5,1079.3L-690.3,1080.5L-548.7,935.6L244.9,122.9ZM251.0,122.2L-533.6,934.4L-675.1,1080.9L-673.8,1082.1L-532.3,935.6L252.1,123.2ZM258.2,122.4L-517.2,934.4L-658.6,1082.4L-657.3,1083.7L-515.9,935.6L259.3,123.5ZM265.4,122.7L-500.8,934.4L-642.0,1084.0L-640.7,1085.3L-499.5,935.6L266.5,123.7ZM272.6,123.0L-484.4,934.4L-625.4,1085.6L-624.1,1086.9L-483.1,935.6L273.7,124.0ZM279.8,123.3L-468.0,934.4L-608.8,1087.2L-607.5,1088.4L-466.7,935.6L280.9,124.3ZM287.0,123.5L-451.6,934.4L-592.2,1088.8L-590.9,1090.0L-450.2,935.6L288.1,124.6ZM294.2,123.8L-435.2,934.4L-575.5,1090.4L-574.2,1091.6L-433.8,935.6L295.3,124.8ZM308.6,124.4L-402.4,934.4L-542.1,1093.6L-540.7,1094.8L-401.0,935.6L309.7,125.4ZM315.8,124.7L-386.0,934.4L-525.3,1095.3L-524.0,1096.4L-384.6,935.6L317.0,125.6ZM323.1,124.9L-369.6,934.4L-508.5,1096.9L-507.2,1098.0L-368.2,935.6L324.2,125.9ZM330.3,125.2L-353.2,934.4L-491.7,1098.5L-490.3,1099.6L-351.8,935.6L331.5,126.2ZM337.6,125.5L-336.8,934.4L-474.8,1100.1L-473.5,1101.3L-335.4,935.6L338.7,126.5ZM344.8,125.8L-320.4,934.4L-458.0,1101.7L-456.6,1102.9L-319.0,935.6L346.0,126.7ZM352.1,126.1L-304.0,934.4L-441.0,1103.4L-439.6,1104.5L-302.6,935.6L353.2,127.0ZM359.3,126.3L-287.6,934.4L-424.1,1105.0L-422.7,1106.1L-286.2,935.6L360.5,127.3ZM366.6,126.6L-271.2,934.4L-407.1,1106.6L-405.7,1107.7L-269.8,935.6L367.8,127.5ZM381.2,127.2L-238.4,934.5L-373.0,1109.9L-371.6,1111.0L-236.9,935.5L382.4,128.1ZM388.5,127.5L-222.0,934.5L-355.9,1111.6L-354.5,1112.6L-220.5,935.5L389.7,128.4ZM395.8,127.7L-205.6,934.5L-338.8,1113.2L-337.3,1114.3L-204.1,935.5L397.0,128.6ZM403.1,128.0L-189.2,934.5L-321.6,1114.8L-320.2,1115.9L-187.7,935.5L404.3,128.9ZM410.4,128.3L-172.8,934.5L-304.4,1116.5L-302.9,1117.6L-171.3,935.5L411.6,129.2ZM417.7,128.6L-156.4,934.5L-287.2,1118.2L-285.7,1119.2L-154.9,935.5L418.9,129.5ZM425.0,128.9L-140.0,934.5L-269.9,1119.8L-268.4,1120.9L-138.5,935.5L426.2,129.7ZM432.3,129.2L-123.6,934.5L-252.6,1121.5L-251.1,1122.5L-122.1,935.5L433.5,130.0ZM439.6,129.4L-107.2,934.5L-235.3,1123.2L-233.8,1124.2L-105.7,935.5L440.9,130.3ZM454.3,130.0L-74.4,934.5L-200.5,1126.5L-199.0,1127.5L-72.9,935.5L455.6,130.8ZM461.7,130.3L-58.0,934.5L-183.1,1128.2L-181.6,1129.2L-56.5,935.5L462.9,131.1ZM469.0,130.6L-41.6,934.5L-165.6,1129.9L-164.1,1130.8L-40.1,935.5L470.3,131.4ZM476.4,130.9L-25.2,934.5L-148.1,1131.5L-146.6,1132.5L-23.7,935.5L477.6,131.7ZM483.7,131.1L-8.8,934.5L-130.6,1133.2L-129.1,1134.2L-7.3,935.5L485.0,131.9ZM491.1,131.4L7.6,934.5L-113.0,1134.9L-111.5,1135.8L9.1,935.5L492.4,132.2ZM498.5,131.7L24.0,934.5L-95.4,1136.6L-93.9,1137.5L25.5,935.5L499.8,132.5ZM505.9,132.0L40.4,934.5L-77.8,1138.3L-76.2,1139.2L41.9,935.5L507.2,132.8ZM513.2,132.3L56.8,934.6L-60.1,1140.0L-58.5,1140.9L58.3,935.4L514.5,133.0ZM528.0,132.9L89.5,934.6L-24.6,1143.4L-23.1,1144.3L91.1,935.4L529.4,133.6ZM535.4,133.2L105.9,934.6L-6.9,1145.1L-5.3,1146.0L107.5,935.4L536.8,133.9ZM542.8,133.4L122.3,934.6L11.0,1146.9L12.5,1147.7L123.9,935.4L544.2,134.1ZM550.3,133.7L138.7,934.6L28.8,1148.6L30.4,1149.4L140.3,935.4L551.6,134.4ZM557.7,134.0L155.1,934.6L46.7,1150.3L48.3,1151.1L156.7,935.4L559.0,134.7ZM565.1,134.3L171.5,934.6L64.6,1152.0L66.2,1152.8L173.1,935.4L566.5,135.0ZM572.6,134.6L187.9,934.6L82.6,1153.8L84.2,1154.5L189.5,935.4L573.9,135.3ZM580.0,134.9L204.3,934.6L100.6,1155.5L102.2,1156.2L205.9,935.4L581.4,135.5ZM587.4,135.2L220.7,934.6L118.6,1157.2L120.2,1158.0L222.3,935.4L588.8,135.8ZM602.4,135.8L253.5,934.6L154.8,1160.7L156.4,1161.4L255.1,935.4L603.7,136.4ZM609.8,136.1L269.9,934.6L172.9,1162.5L174.6,1163.2L271.5,935.4L611.2,136.6ZM617.3,136.3L286.2,934.7L191.1,1164.2L192.8,1164.9L287.9,935.3L618.7,136.9ZM624.8,136.6L302.6,934.7L209.3,1166.0L211.0,1166.6L304.3,935.3L626.2,137.2ZM632.3,136.9L319.0,934.7L227.6,1167.7L229.2,1168.4L320.7,935.3L633.7,137.5ZM639.7,137.2L335.4,934.7L245.9,1169.5L247.5,1170.1L337.1,935.3L641.1,137.8ZM647.2,137.5L351.8,934.7L264.2,1171.2L265.9,1171.9L353.5,935.3L648.7,138.0ZM654.7,137.8L368.2,934.7L282.5,1173.0L284.2,1173.6L369.9,935.3L656.2,138.3ZM662.2,138.1L384.6,934.7L300.9,1174.8L302.6,1175.4L386.3,935.3L663.7,138.6ZM677.3,138.7L417.4,934.7L337.9,1178.3L339.6,1178.9L419.1,935.3L678.7,139.1ZM684.8,139.0L433.7,934.7L356.4,1180.1L358.1,1180.7L435.5,935.3L686.2,139.4ZM692.3,139.3L450.1,934.7L374.9,1181.9L376.6,1182.4L451.9,935.3L693.8,139.7ZM699.9,139.6L466.5,934.7L393.5,1183.7L395.2,1184.2L468.3,935.3L701.3,140.0ZM707.4,139.9L482.9,934.8L412.1,1185.5L413.9,1186.0L484.6,935.2L708.9,140.3ZM715.0,140.2L499.3,934.8L430.8,1187.3L432.5,1187.8L501.0,935.2L716.4,140.5ZM722.5,140.4L515.7,934.8L449.5,1189.1L451.2,1189.6L517.4,935.2L724.0,140.8ZM730.1,140.7L532.1,934.8L468.2,1190.9L470.0,1191.3L533.8,935.2L731.6,141.1ZM737.7,141.0L548.5,934.8L487.0,1192.7L488.8,1193.1L550.2,935.2L739.1,141.4ZM752.8,141.6L581.2,934.8L524.7,1196.3L526.5,1196.7L583.0,935.2L754.3,142.0ZM760.4,141.9L597.6,934.8L543.6,1198.2L545.4,1198.5L599.4,935.2L761.9,142.2ZM768.0,142.2L614.0,934.8L562.5,1200.0L564.3,1200.3L615.8,935.2L769.5,142.5ZM775.6,142.5L630.4,934.8L581.5,1201.8L583.3,1202.1L632.2,935.2L777.1,142.8ZM783.2,142.8L646.8,934.8L600.5,1203.7L602.3,1204.0L648.6,935.2L784.7,143.1ZM790.8,143.1L663.2,934.9L619.6,1205.5L621.3,1205.8L664.9,935.1L792.3,143.4ZM798.5,143.4L679.5,934.9L638.7,1207.3L640.4,1207.6L681.3,935.1L799.9,143.6ZM806.1,143.7L695.9,934.9L657.8,1209.2L659.6,1209.4L697.7,935.1L807.6,143.9ZM813.7,144.0L712.3,934.9L677.0,1211.0L678.8,1211.2L714.1,935.1L815.2,144.2ZM829.0,144.6L745.1,934.9L715.4,1214.7L717.2,1214.9L746.9,935.1L830.5,144.8ZM836.7,144.9L761.5,934.9L734.7,1216.6L736.5,1216.8L763.3,935.1L838.2,145.1ZM844.3,145.2L777.9,934.9L754.0,1218.4L755.8,1218.6L779.6,935.1L845.8,145.3ZM852.0,145.5L794.2,934.9L773.4,1220.3L775.2,1220.4L796.0,935.1L853.5,145.6ZM859.6,145.8L810.6,934.9L792.8,1222.2L794.6,1222.3L812.4,935.1L861.2,145.9ZM867.3,146.1L827.0,935.0L812.3,1224.1L814.1,1224.2L828.8,935.0L868.8,146.2ZM875.0,146.4L843.4,935.0L831.8,1225.9L833.6,1226.0L845.2,935.0L876.5,146.5ZM882.7,146.7L859.8,935.0L851.3,1227.8L853.1,1227.9L861.6,935.0L884.2,146.8ZM890.4,147.0L876.2,935.0L870.9,1229.7L872.7,1229.7L878.0,935.0L891.9,147.0ZM905.8,147.6L908.9,935.0L910.2,1233.5L912.0,1233.5L910.7,935.0L907.3,147.6ZM913.5,147.9L925.3,935.0L929.9,1235.4L931.7,1235.4L927.1,935.0L915.0,147.9ZM921.2,148.2L941.7,935.0L949.6,1237.3L951.4,1237.2L943.5,935.0L922.8,148.2ZM929.0,148.5L958.1,935.0L969.4,1239.2L971.2,1239.1L959.9,935.0L930.5,148.5ZM936.7,148.8L974.4,935.0L989.2,1241.1L991.0,1241.0L976.2,935.0L938.2,148.8ZM944.4,149.1L990.8,935.1L1009.1,1243.0L1010.9,1242.9L992.6,934.9L946.0,149.0ZM952.2,149.4L1007.2,935.1L1029.0,1244.9L1030.8,1244.8L1009.0,934.9L953.7,149.3ZM959.9,149.7L1023.6,935.1L1048.9,1246.9L1050.7,1246.7L1025.4,934.9L961.5,149.6ZM967.7,150.0L1040.0,935.1L1068.9,1248.8L1070.7,1248.6L1041.8,934.9L969.2,149.9ZM983.3,150.7L1072.7,935.1L1109.0,1252.7L1110.8,1252.5L1074.5,934.9L984.8,150.5ZM991.0,151.0L1089.1,935.1L1129.1,1254.6L1130.9,1254.4L1090.9,934.9L992.5,150.8ZM998.8,151.3L1105.5,935.1L1149.3,1256.5L1151.1,1256.3L1107.3,934.9L1000.3,151.1ZM1006.6,151.6L1121.9,935.1L1169.5,1258.5L1171.3,1258.2L1123.7,934.9L1008.1,151.3ZM1014.4,151.9L1138.3,935.1L1189.8,1260.4L1191.5,1260.2L1140.0,934.9L1015.9,151.6ZM1022.2,152.2L1154.6,935.2L1210.0,1262.4L1211.8,1262.1L1156.4,934.8L1023.7,151.9ZM1030.0,152.5L1171.0,935.2L1230.4,1264.4L1232.2,1264.0L1172.8,934.8L1031.5,152.2ZM1037.9,152.8L1187.4,935.2L1250.8,1266.3L1252.5,1266.0L1189.2,934.8L1039.3,152.5ZM1045.7,153.1L1203.8,935.2L1271.2,1268.3L1272.9,1267.9L1205.5,934.8L1047.2,152.8ZM1061.3,153.7L1236.5,935.2L1312.2,1272.2L1313.9,1271.8L1238.3,934.8L1062.8,153.4ZM1069.2,154.0L1252.9,935.2L1332.7,1274.2L1334.5,1273.8L1254.7,934.8L1070.7,153.7ZM1077.0,154.3L1269.3,935.2L1353.3,1276.2L1355.1,1275.8L1271.0,934.8L1078.5,154.0ZM1084.9,154.6L1285.7,935.2L1373.9,1278.2L1375.7,1277.7L1287.4,934.8L1086.4,154.2ZM1092.8,154.9L1302.1,935.2L1394.6,1280.2L1396.4,1279.7L1303.8,934.8L1094.2,154.5ZM1100.6,155.2L1318.4,935.2L1415.4,1282.2L1417.1,1281.7L1320.2,934.8L1102.1,154.8ZM1108.5,155.5L1334.8,935.3L1436.1,1284.2L1437.9,1283.7L1336.5,934.7L1110.0,155.1ZM1116.4,155.9L1351.2,935.3L1457.0,1286.2L1458.7,1285.7L1352.9,934.7L1117.9,155.4ZM1124.3,156.2L1367.6,935.3L1477.8,1288.2L1479.5,1287.6L1369.3,934.7L1125.7,155.7ZM1140.1,156.8L1400.3,935.3L1519.7,1292.2L1521.4,1291.6L1402.0,934.7L1141.5,156.3ZM1148.0,157.1L1416.7,935.3L1540.7,1294.2L1542.4,1293.6L1418.4,934.7L1149.4,156.6ZM1155.9,157.4L1433.1,935.3L1561.7,1296.3L1563.4,1295.7L1434.8,934.7L1157.4,156.9ZM1163.9,157.7L1449.4,935.3L1582.8,1298.3L1584.5,1297.7L1451.1,934.7L1165.3,157.2ZM1171.8,158.0L1465.8,935.3L1604.0,1300.3L1605.6,1299.7L1467.5,934.7L1173.2,157.5ZM1179.7,158.3L1482.2,935.3L1625.1,1302.4L1626.8,1301.7L1483.9,934.7L1181.1,157.8ZM1187.7,158.6L1498.6,935.3L1646.4,1304.4L1648.0,1303.7L1500.2,934.7L1189.1,158.1ZM1195.6,158.9L1514.9,935.3L1667.7,1306.5L1669.3,1305.8L1516.6,934.7L1197.0,158.4ZM1203.6,159.2L1531.3,935.4L1689.0,1308.5L1690.6,1307.8L1533.0,934.6L1205.0,158.7ZM1219.5,159.9L1564.1,935.4L1731.8,1312.6L1733.4,1311.9L1565.7,934.6L1220.9,159.3ZM1227.5,160.2L1580.4,935.4L1753.2,1314.7L1754.9,1313.9L1582.1,934.6L1228.9,159.5ZM1235.5,160.5L1596.8,935.4L1774.7,1316.8L1776.4,1316.0L1598.5,934.6L1236.9,159.8ZM1243.5,160.8L1613.2,935.4L1796.3,1318.8L1797.9,1318.1L1614.8,934.6L1244.8,160.1ZM1251.5,161.1L1629.6,935.4L1817.9,1320.9L1819.5,1320.1L1631.2,934.6L1252.8,160.4ZM1259.5,161.4L1645.9,935.4L1839.6,1323.0L1841.2,1322.2L1647.6,934.6L1260.8,160.7ZM1267.5,161.7L1662.3,935.4L1861.3,1325.1L1862.9,1324.3L1663.9,934.6L1268.8,161.0ZM1275.5,162.0L1678.7,935.4L1883.0,1327.2L1884.6,1326.3L1680.3,934.6L1276.9,161.3ZM1283.5,162.4L1695.1,935.4L1904.8,1329.3L1906.4,1328.4L1696.7,934.6L1284.9,161.6ZM1299.6,163.0L1727.8,935.4L1948.5,1333.5L1950.1,1332.6L1729.4,934.6L1300.9,162.2ZM1307.7,163.3L1744.2,935.4L1970.5,1335.6L1972.0,1334.7L1745.7,934.6L1309.0,162.5ZM1315.7,163.6L1760.5,935.4L1992.5,1337.7L1994.0,1336.8L1762.1,934.6L1317.0,162.8ZM1323.8,163.9L1776.9,935.5L2014.5,1339.8L2016.1,1338.9L1778.5,934.5L1325.1,163.1ZM1331.8,164.2L1793.3,935.5L2036.6,1341.9L2038.1,1341.0L1794.8,934.5L1333.1,163.4ZM1339.9,164.5L1809.7,935.5L2058.7,1344.1L2060.3,1343.1L1811.2,934.5L1341.2,163.7ZM1348.0,164.8L1826.0,935.5L2080.9,1346.2L2082.4,1345.2L1827.6,934.5L1349.3,164.0ZM1356.1,165.2L1842.4,935.5L2103.1,1348.3L2104.7,1347.4L1843.9,934.5L1357.4,164.4ZM1364.2,165.5L1858.8,935.5L2125.4,1350.5L2126.9,1349.5L1860.3,934.5L1365.4,164.7ZM1380.4,166.1L1891.5,935.5L2170.1,1354.8L2171.6,1353.8L1893.0,934.5L1381.6,165.3ZM1388.5,166.4L1907.9,935.5L2192.6,1356.9L2194.1,1355.9L1909.4,934.5L1389.7,165.6ZM1396.6,166.7L1924.3,935.5L2215.1,1359.1L2216.6,1358.1L1925.7,934.5L1397.9,165.9ZM1404.7,167.0L1940.6,935.5L2237.6,1361.3L2239.1,1360.2L1942.1,934.5L1406.0,166.2ZM1412.9,167.4L1957.0,935.5L2260.2,1363.4L2261.7,1362.4L1958.5,934.5L1414.1,166.5ZM1421.0,167.7L1973.4,935.5L2282.8,1365.6L2284.3,1364.6L1974.8,934.5L1422.2,166.8ZM1429.2,168.0L1989.7,935.5L2305.5,1367.8L2307.0,1366.7L1991.2,934.5L1430.4,167.1ZM1437.3,168.3L2006.1,935.5L2328.3,1370.0L2329.7,1368.9L2007.5,934.5L1438.5,167.4ZM1445.5,168.6L2022.5,935.5L2351.0,1372.2L2352.5,1371.1L2023.9,934.5L1446.7,167.7ZM1461.8,169.2L2055.2,935.6L2396.8,1376.6L2398.2,1375.4L2056.6,934.4L1463.0,168.3ZM1470.0,169.6L2071.6,935.6L2419.7,1378.8L2421.1,1377.6L2073.0,934.4L1471.2,168.6ZM1478.2,169.9L2087.9,935.6L2442.7,1381.0L2444.1,1379.8L2089.3,934.4L1479.4,168.9ZM1486.4,170.2L2104.3,935.6L2465.8,1383.2L2467.2,1382.0L2105.7,934.4L1487.6,169.2ZM1494.6,170.5L2120.7,935.6L2488.9,1385.4L2490.3,1384.3L2122.0,934.4L1495.8,169.5ZM1502.8,170.8L2137.0,935.6L2512.0,1387.6L2513.4,1386.5L2138.4,934.4L1504.0,169.9ZM1511.0,171.1L2153.4,935.6L2535.2,1389.9L2536.6,1388.7L2154.8,934.4L1512.2,170.2ZM1519.2,171.5L2169.7,935.6L2558.5,1392.1L2559.9,1390.9L2171.1,934.4L1520.4,170.5ZM1527.5,171.8L2186.1,935.6L2581.8,1394.3L2583.2,1393.1L2187.5,934.4L1528.6,170.8ZM1544.0,172.4L2218.8,935.6L2628.6,1398.8L2629.9,1397.6L2220.2,934.4L1545.1,171.4ZM1552.2,172.7L2235.2,935.6L2652.1,1401.1L2653.4,1399.9L2236.5,934.4L1553.3,171.7ZM1560.5,173.0L2251.6,935.6L2675.6,1403.3L2676.9,1402.1L2252.9,934.4L1561.6,172.0ZM1568.7,173.4L2267.9,935.6L2699.2,1405.6L2700.5,1404.4L2269.3,934.4L1569.8,172.3ZM1577.0,173.7L2284.3,935.6L2722.8,1407.9L2724.1,1406.6L2285.6,934.4L1578.1,172.6Z"/>
<path d="M226.6,126.0L1791.5,185.9L1791.5,184.4L226.6,124.5ZM223.1,129.5L1796.4,190.0L1796.4,188.5L223.2,128.0ZM219.6,133.0L1801.4,194.2L1801.4,192.6L219.7,131.5ZM216.1,136.5L1806.4,198.4L1806.5,196.8L216.1,135.0ZM212.5,140.1L1811.5,202.6L1811.6,201.1L212.6,138.6ZM208.9,143.7L1816.6,206.9L1816.7,205.3L209.0,142.2ZM205.3,147.3L1821.9,211.2L1821.9,209.7L205.3,145.8ZM201.6,151.0L1827.1,215.6L1827.2,214.0L201.7,149.5ZM197.9,154.7L1832.5,220.0L1832.5,218.5L197.9,153.2ZM190.3,162.3L1843.3,229.0L1843.4,227.5L190.4,160.8ZM186.5,166.1L1848.8,233.6L1848.9,232.1L186.6,164.6ZM182.6,170.0L1854.4,238.3L1854.5,236.7L182.7,168.5ZM178.7,174.0L1860.1,242.9L1860.1,241.4L178.8,172.4ZM174.7,177.9L1865.8,247.7L1865.8,246.2L174.8,176.4ZM170.7,181.9L1871.6,252.5L1871.6,251.0L170.8,180.4ZM166.7,186.0L1877.4,257.4L1877.5,255.8L166.7,184.5ZM162.6,190.1L1883.3,262.3L1883.4,260.8L162.6,188.6ZM158.4,194.2L1889.3,267.3L1889.4,265.7L158.5,192.7ZM150.0,202.7L1901.6,277.5L1901.6,275.9L150.1,201.1ZM145.7,207.0L1907.8,282.6L1907.9,281.1L145.8,205.4ZM141.4,211.3L1914.1,287.9L1914.2,286.3L141.5,209.8ZM137.0,215.7L1920.5,293.2L1920.6,291.6L137.1,214.2ZM132.6,220.1L1927.0,298.5L1927.0,297.0L132.6,218.6ZM128.1,224.6L1933.5,304.0L1933.6,302.4L128.2,223.1ZM123.6,229.2L1940.1,309.5L1940.2,307.9L123.6,227.6ZM119.0,233.8L1946.9,315.1L1946.9,313.5L119.0,232.2ZM114.3,238.4L1953.7,320.7L1953.7,319.2L114.4,236.9ZM104.9,247.9L1967.5,332.3L1967.6,330.7L104.9,246.3ZM100.1,252.7L1974.6,338.2L1974.7,336.6L100.1,251.2ZM95.2,257.6L1981.8,344.1L1981.9,342.6L95.3,256.0ZM90.2,262.5L1989.1,350.2L1989.1,348.6L90.3,261.0ZM85.3,267.5L1996.4,356.3L1996.5,354.7L85.3,266.0ZM80.2,272.6L2003.9,362.5L2004.0,360.9L80.3,271.0ZM75.1,277.7L2011.5,368.8L2011.6,367.2L75.2,276.1ZM69.9,282.9L2019.2,375.2L2019.2,373.6L70.0,281.3ZM64.7,288.1L2027.0,381.7L2027.0,380.1L64.7,286.6ZM54.0,298.8L2042.9,394.9L2042.9,393.3L54.0,297.3ZM48.5,304.3L2051.0,401.6L2051.1,400.0L48.6,302.7ZM43.0,309.8L2059.2,408.5L2059.3,406.9L43.1,308.3ZM37.4,315.4L2067.6,415.4L2067.7,413.8L37.5,313.9ZM31.7,321.1L2076.1,422.5L2076.1,420.9L31.8,319.5ZM26.0,326.8L2084.7,429.6L2084.7,428.0L26.1,325.3ZM20.2,332.7L2093.4,436.9L2093.5,435.3L20.3,331.1ZM14.3,338.6L2102.3,444.3L2102.3,442.6L14.4,337.0ZM8.3,344.6L2111.2,451.7L2111.3,450.1L8.4,343.0ZM-3.9,356.8L2129.6,467.0L2129.7,465.4L-3.8,355.2ZM-10.1,363.0L2139.1,474.8L2139.1,473.2L-10.0,361.4ZM-16.4,369.3L2148.6,482.8L2148.7,481.2L-16.3,367.7ZM-22.8,375.7L2158.3,490.9L2158.4,489.2L-22.7,374.1ZM-29.3,382.2L2168.2,499.0L2168.3,497.4L-29.2,380.6ZM-35.8,388.8L2178.2,507.4L2178.3,505.7L-35.7,387.2ZM-42.5,395.4L2188.4,515.8L2188.5,514.2L-42.4,393.8ZM-49.3,402.2L2198.7,524.4L2198.8,522.8L-49.2,400.6ZM-56.1,409.1L2209.2,533.2L2209.3,531.5L-56.0,407.5ZM-70.1,423.1L2230.7,551.1L2230.8,549.4L-70.0,421.5ZM-77.3,430.3L2241.8,560.2L2241.9,558.6L-77.2,428.7ZM-84.6,437.6L2253.0,569.6L2253.1,567.9L-84.5,436.0ZM-92.0,445.0L2264.4,579.0L2264.5,577.4L-91.9,443.3ZM-99.4,452.5L2276.0,588.7L2276.1,587.0L-99.3,450.8ZM-107.0,460.1L2287.8,598.5L2287.9,596.8L-107.0,458.4ZM-114.8,467.8L2299.8,608.5L2299.9,606.8L-114.7,466.2ZM-122.6,475.6L2312.0,618.6L2312.1,616.9L-122.5,474.0ZM-130.6,483.6L2324.5,629.0L2324.6,627.3L-130.5,482.0ZM-146.9,499.9L2350.0,650.2L2350.1,648.5L-146.8,498.3ZM-155.2,508.3L2363.1,661.1L2363.2,659.4L-155.1,506.6ZM-163.7,516.8L2376.5,672.2L2376.6,670.5L-163.6,515.1ZM-172.3,525.4L2390.1,683.5L2390.2,681.8L-172.2,523.8ZM-181.0,534.2L2404.0,695.0L2404.1,693.3L-180.9,532.5ZM-189.9,543.1L2418.1,706.8L2418.2,705.0L-189.8,541.4ZM-199.0,552.1L2432.5,718.7L2432.6,717.0L-198.9,550.5ZM-208.2,561.3L2447.1,730.9L2447.2,729.2L-208.1,559.7ZM-217.5,570.7L2462.1,743.3L2462.2,741.6L-217.4,569.0ZM-236.7,589.9L2492.9,768.9L2493.0,767.2L-236.6,588.2ZM-246.5,599.7L2508.7,782.1L2508.8,780.3L-246.4,598.1ZM-256.5,609.8L2524.9,795.5L2525.0,793.8L-256.4,608.1ZM-266.7,620.0L2541.4,809.2L2541.5,807.5L-266.6,618.3ZM-277.1,630.3L2558.2,823.2L2558.3,821.5L-277.0,628.7ZM-287.6,640.9L2575.4,837.5L2575.5,835.8L-287.5,639.2ZM-298.4,651.7L2593.0,852.1L2593.1,850.3L-298.3,650.0ZM-309.3,662.6L2610.9,867.0L2611.0,865.2L-309.2,660.9ZM-320.4,673.8L2629.2,882.2L2629.3,880.4L-320.3,672.1ZM-343.3,696.7L2667.0,913.6L2667.1,911.9L-343.2,695.0ZM-355.1,708.5L2686.5,929.9L2686.7,928.1L-355.0,706.8ZM-367.1,720.5L2562.5,935.9L2706.5,946.5L2706.6,944.7L2562.6,934.1L-367.0,718.8ZM-379.3,732.7L2355.8,935.9L2726.9,963.5L2727.1,961.7L2355.9,934.1L-379.2,731.0ZM-391.8,745.2L2149.1,935.9L2747.8,980.8L2748.0,979.0L2149.2,934.1L-391.7,743.5ZM-404.5,757.9L1942.3,935.9L2769.2,998.6L2769.3,996.8L1942.5,934.1L-404.4,756.2ZM-417.5,770.9L1735.5,935.9L2791.1,1016.8L2791.2,1015.0L1735.7,934.1L-417.3,769.2ZM-430.7,784.1L1528.7,935.9L2813.5,1035.4L2813.6,1033.6L1528.8,934.1L-430.6,782.4ZM-444.2,797.6L1321.8,935.9L2836.4,1054.5L2836.6,1052.7L1321.9,934.1L-444.0,795.9ZM-472.0,825.5L907.8,935.9L2884.0,1094.0L2884.1,1092.2L908.0,934.1L-471.9,823.7ZM-486.3,839.9L700.8,935.9L2908.7,1114.5L2908.8,1112.7L701.0,934.1L-486.2,838.1ZM-501.0,854.5L493.7,935.9L2934.0,1135.5L2934.1,1133.7L493.9,934.1L-500.8,852.8ZM-515.9,869.5L286.6,935.9L2959.9,1157.1L2960.1,1155.3L286.8,934.1L-515.8,867.7ZM-531.2,884.8L79.4,935.9L2986.5,1179.2L2986.7,1177.4L79.6,934.1L-531.1,883.0ZM-546.8,900.4L-127.8,935.9L3013.8,1201.9L3014.0,1200.1L-127.6,934.1L-546.7,898.6ZM-562.8,916.4L-335.0,935.9L3041.9,1225.2L3042.0,1223.4L-334.9,934.1L-562.6,914.6ZM-579.1,932.7L-542.3,935.9L3070.7,1249.1L3070.8,1247.3L-542.2,934.1L-578.9,930.9ZM-595.7,949.4L3100.2,1273.7L3100.4,1271.9L-595.6,947.6ZM-630.2,983.9L3161.9,1324.9L3162.1,1323.1L-630.1,982.1ZM-648.1,1001.8L3194.0,1351.6L3194.2,1349.8L-647.9,1000.0ZM-666.4,1020.1L3227.1,1379.1L3227.3,1377.3L-666.2,1018.3ZM-685.1,1038.8L3261.1,1407.4L3261.3,1405.6L-684.9,1037.0ZM-704.2,1058.0L3296.2,1436.5L3296.4,1434.7L-704.1,1056.2ZM-723.8,1077.7L3332.3,1466.5L3332.5,1464.7L-723.7,1075.9Z"/>
</g>
<g fill="#2f9dc8" fill-opacity=".48">
<path d="M229.5,121.3L-582.8,934.3L-724.4,1076.1L-723.1,1077.4L-581.5,935.7L230.5,122.4ZM301.4,124.1L-418.8,934.4L-558.9,1092.0L-557.5,1093.3L-417.4,935.6L302.5,125.1ZM373.9,126.9L-254.8,934.4L-390.1,1108.2L-388.6,1109.4L-253.3,935.6L375.1,127.8ZM447.0,129.7L-90.8,934.5L-218.0,1124.8L-216.4,1125.9L-89.3,935.5L448.2,130.6ZM520.6,132.6L73.1,934.5L-42.4,1141.7L-40.8,1142.6L74.8,935.5L521.9,133.3ZM594.9,135.5L237.0,934.6L136.6,1158.9L138.4,1159.7L238.8,935.4L596.3,136.1ZM669.8,138.4L400.9,934.7L319.3,1176.5L321.1,1177.2L402.7,935.3L671.2,138.9ZM745.2,141.3L564.8,934.8L505.8,1194.5L507.6,1194.9L566.7,935.2L746.7,141.7ZM821.4,144.3L728.7,934.9L696.1,1212.9L698.0,1213.1L730.5,935.1L822.9,144.5ZM898.1,147.3L892.5,935.0L890.5,1231.6L892.4,1231.6L894.4,935.0L899.6,147.3ZM975.5,150.3L1056.3,935.1L1088.9,1250.7L1090.8,1250.5L1058.2,934.9L977.0,150.2ZM1053.5,153.4L1220.1,935.2L1291.6,1270.3L1293.5,1269.9L1222.0,934.8L1055.0,153.1ZM1132.2,156.5L1383.9,935.3L1498.7,1290.2L1500.5,1289.6L1385.7,934.7L1133.6,156.0ZM1211.5,159.6L1547.7,935.4L1710.3,1310.6L1712.0,1309.8L1549.4,934.6L1212.9,159.0ZM1291.6,162.7L1711.4,935.5L1926.6,1331.4L1928.3,1330.5L1713.1,934.5L1292.9,161.9ZM1372.3,165.8L1875.1,935.5L2147.7,1352.7L2149.3,1351.6L1876.7,934.5L1373.5,165.0ZM1453.6,168.9L2038.8,935.6L2373.8,1374.4L2375.4,1373.2L2040.3,934.4L1454.8,168.0ZM1535.7,172.1L2202.4,935.6L2605.1,1396.6L2606.6,1395.4L2203.9,934.4L1536.9,171.1Z"/>
<path d="M230.0,122.6L1786.6,181.9L1786.6,180.4L230.0,121.1ZM194.1,158.5L1837.8,224.5L1837.9,222.9L194.2,157.0ZM154.2,198.4L1895.4,272.4L1895.5,270.8L154.3,196.9ZM109.6,243.1L1960.6,326.5L1960.6,324.9L109.7,241.6ZM59.3,293.5L2034.8,388.2L2034.9,386.6L59.4,291.9ZM2.3,350.6L2120.4,459.3L2120.5,457.7L2.4,349.0ZM-63.1,416.1L2219.9,542.1L2220.0,540.4L-63.0,414.4ZM-138.6,491.7L2337.1,639.5L2337.2,637.8L-138.5,490.1ZM-227.0,580.2L2477.3,756.0L2477.4,754.2L-226.9,578.5ZM-331.8,685.1L2647.9,897.8L2648.0,895.9L-331.7,683.4ZM-457.9,811.5L1114.8,935.9L2859.9,1074.0L2860.1,1072.1L1115.0,934.1L-457.8,809.6ZM-612.8,966.5L3130.6,1299.0L3130.8,1297.1L-612.6,964.6Z"/>
</g>
</svg>
<div id="wp" style="transform:matrix3d(-0.96643931,-0.030681505,0,5.4071892e-05,0.51772648,-0.31659686,0,0.00057292302,0,0,1,0,1541.3586,210.91679,0,0.84091498)">Pracovní plocha</div>
<svg id="model" width="1575" height="817" viewBox="0 118 1575 817">
<defs>
<linearGradient id="gb" gradientUnits="userSpaceOnUse" x1="724" y1="0" x2="976" y2="0"><stop offset="0" stop-color="#a8141f"/><stop offset=".12" stop-color="#9e121d"/><stop offset=".5" stop-color="#8c0f1a"/><stop offset=".85" stop-color="#7e0d17"/><stop offset="1" stop-color="#760c15"/></linearGradient>
<linearGradient id="gd" gradientUnits="userSpaceOnUse" x1="693" y1="0" x2="1016" y2="0"><stop offset="0" stop-color="#ad1520"/><stop offset=".2" stop-color="#9c121d"/><stop offset=".55" stop-color="#8a0f19"/><stop offset="1" stop-color="#780c16"/></linearGradient>
<linearGradient id="gt" gradientUnits="userSpaceOnUse" x1="700" y1="300" x2="1010" y2="400"><stop offset="0" stop-color="#df1c2c"/><stop offset="1" stop-color="#d91c2b"/></linearGradient>
<linearGradient id="gh" x1="0" y1="0" x2="1" y2="0"><stop offset="0" stop-color="#7c0d17"/><stop offset=".45" stop-color="#8c0f1a"/><stop offset="1" stop-color="#bb1622"/></linearGradient>
<clipPath id="c0"><ellipse cx="643.1" cy="443.6" rx="16.7" ry="11.5"/></clipPath>
<clipPath id="c1"><ellipse cx="1020.1" cy="464.6" rx="17.3" ry="12.1"/></clipPath>
<clipPath id="c2"><ellipse cx="614.1" cy="554.5" rx="18.8" ry="14.3"/></clipPath>
<clipPath id="c3"><ellipse cx="1033.1" cy="580.2" rx="19.1" ry="15.0"/></clipPath>
</defs>
<g stroke="#3f5f7e" stroke-width="2.1" stroke-linejoin="round">
<path d="M611.2,412.6L1057.1,435.3L1084.1,616.1L560.1,583.4Z" fill="#dc1c2b"/>
<ellipse cx="643.1" cy="443.6" rx="16.7" ry="11.5" fill="url(#gh)" stroke-width="1.7"/>
<g clip-path="url(#c0)"><ellipse cx="643.7" cy="462.20000000000005" rx="14.7" ry="10.7" fill="#dfe8ee" stroke-width="2.4"/></g>
<ellipse cx="1020.1" cy="464.6" rx="17.3" ry="12.1" fill="url(#gh)" stroke-width="1.7"/>
<g clip-path="url(#c1)"><ellipse cx="1018.5" cy="483.40000000000003" rx="15.3" ry="11.299999999999999" fill="#dfe8ee" stroke-width="2.4"/></g>
<ellipse cx="614.1" cy="554.5" rx="18.8" ry="14.3" fill="url(#gh)" stroke-width="1.7"/>
<g clip-path="url(#c2)"><ellipse cx="614.6" cy="573.7" rx="16.8" ry="13.5" fill="#dfe8ee" stroke-width="2.4"/></g>
<ellipse cx="1033.1" cy="580.2" rx="19.1" ry="15.0" fill="url(#gh)" stroke-width="1.7"/>
<g clip-path="url(#c3)"><ellipse cx="1031.8999999999999" cy="599.7" rx="17.1" ry="14.2" fill="#dfe8ee" stroke-width="2.4"/></g>
<path d="M560.1,583.4L1084.1,616.1L1079.7,632.8L563.8,600.6Z" fill="#8e101b"/>
<path d="M723.6,400.0L727.4,477.7L727.5,480.8L728.2,484.0L729.4,487.1L731.1,490.1L733.4,493.2L736.1,496.2L739.3,499.1L743.0,502.0L747.2,504.7L751.8,507.4L756.8,510.0L762.2,512.4L768.0,514.7L774.2,516.8L780.6,518.8L787.4,520.7L794.4,522.4L801.6,523.8L809.1,525.1L816.7,526.3L824.4,527.2L832.3,527.9L840.2,528.4L848.1,528.7L856.0,528.8L863.9,528.7L871.6,528.4L879.3,527.8L886.8,527.1L894.2,526.2L901.3,525.1L908.2,523.7L914.8,522.2L921.1,520.6L927.0,518.7L932.6,516.7L937.8,514.5L942.6,512.2L947.0,509.8L950.9,507.2L954.3,504.6L957.3,501.8L959.7,498.9L961.7,496.0L963.1,493.0L964.0,489.9L964.4,486.9L976.5,414.0Z" fill="url(#gb)"/>
<path d="M692.8,343.2L693.7,361.3L693.9,365.8L694.8,370.3L696.4,374.8L698.7,379.2L701.7,383.6L705.4,387.9L709.7,392.1L714.7,396.2L720.3,400.2L726.4,404.0L733.2,407.7L740.5,411.2L748.3,414.5L756.5,417.6L765.2,420.5L774.3,423.1L783.7,425.5L793.5,427.6L803.5,429.5L813.8,431.1L824.2,432.4L834.7,433.4L845.3,434.1L856.0,434.5L866.7,434.6L877.3,434.5L887.7,434.0L898.1,433.2L908.2,432.1L918.1,430.8L927.7,429.1L937.0,427.2L945.8,425.1L954.3,422.6L962.4,419.9L969.9,417.0L976.9,413.9L983.4,410.5L989.3,407.0L994.5,403.3L999.2,399.4L1003.2,395.4L1006.5,391.3L1009.2,387.0L1011.1,382.7L1012.3,378.3L1012.9,373.9L1015.6,357.8Z" fill="url(#gd)"/>
<path d="M1015.6,357.8L1015.1,362.2L1013.8,366.6L1011.9,370.8L1009.2,375.0L1005.9,379.1L1001.9,383.0L997.3,386.8L992.0,390.5L986.2,393.9L979.7,397.2L972.7,400.3L965.2,403.1L957.3,405.8L948.8,408.2L940.0,410.3L930.7,412.2L921.2,413.8L911.3,415.1L901.2,416.1L890.9,416.9L880.4,417.4L869.8,417.5L859.2,417.4L848.5,417.0L837.9,416.3L827.3,415.3L816.8,414.0L806.5,412.5L796.4,410.7L786.6,408.6L777.0,406.2L767.8,403.7L759.0,400.8L750.6,397.8L742.6,394.6L735.2,391.1L728.2,387.5L721.8,383.7L716.0,379.8L710.8,375.8L706.2,371.6L702.3,367.4L699.0,363.0L696.4,358.7L694.5,354.2L693.3,349.8L692.8,345.4L693.0,341.0L693.9,336.6L695.5,332.3L697.8,328.1L700.8,324.0L704.4,319.9L708.7,316.1L713.7,312.3L719.2,308.8L725.4,305.4L732.1,302.2L739.3,299.3L747.1,296.5L755.3,294.0L764.0,291.7L773.0,289.7L782.4,288.0L792.1,286.5L802.1,285.4L812.3,284.5L822.7,283.8L833.3,283.5L843.9,283.5L854.6,283.8L865.2,284.3L875.8,285.2L886.4,286.3L896.8,287.7L907.0,289.4L916.9,291.4L926.6,293.6L936.0,296.0L945.0,298.7L953.7,301.7L961.8,304.8L969.6,308.1L976.8,311.7L983.5,315.4L989.6,319.2L995.1,323.2L1000.0,327.3L1004.3,331.5L1007.9,335.8L1010.8,340.2L1013.1,344.6L1014.6,349.0L1015.5,353.4L1015.6,357.8Z" fill="url(#gt)" stroke="none"/>
<path d="M752.4,398.5L745.9,396.0L739.8,393.3L733.9,390.5L728.4,387.6L723.2,384.6L718.4,381.5L714.0,378.3L709.9,375.0L706.3,371.7L703.1,368.3L700.3,364.9L697.9,361.4L696.0,357.9L694.5,354.3L693.5,350.8L692.9,347.2L692.7,343.7L693.1,340.2L693.8,336.7L695.0,333.3L696.7,329.9L698.8,326.5L701.4,323.2L704.3,320.0L707.7,316.9L711.5,313.9L715.7,311.0L720.3,308.2L725.2,305.5L730.6,302.9L736.2,300.5L742.2,298.2L748.5,296.0L755.1,294.1L762.0,292.2L769.1,290.6L776.5,289.1L784.1,287.7L791.9,286.6L799.9,285.6L808.0,284.8L816.2,284.2L824.6,283.8L833.0,283.5L841.5,283.5L850.0,283.6L858.6,283.9L867.1,284.4L875.6,285.1L884.0,286.0L892.4,287.1L900.6,288.3L908.8,289.7L916.7,291.3L924.5,293.1L932.1,295.0L939.5,297.0L946.6,299.2L953.5,301.6L960.1,304.1L966.4,306.7L972.3,309.4L978.0,312.3L983.3,315.3L988.3,318.3L992.8,321.5L997.0,324.7L1000.8,328.0L1004.2,331.4L1007.1,334.8L1009.7,338.3L1011.7,341.8L1013.4,345.3L1014.6,348.9L1015.4,352.4L1015.7,356.0L1015.5,359.5L1014.9,363.0L1013.9,366.5L1012.4,369.9L1010.4,373.2L1008.1,376.5L1005.2,379.8L1002.0,382.9L998.4,386.0L994.3,388.9L989.9,391.8L985.1,394.5L979.9,397.1L974.3,399.6L968.5,402.0L962.3,404.2L955.8,406.2L949.0,408.1L942.0,409.8" fill="none"/>
</g></svg>
</div>
<svg id="cube" width="140" height="130" viewBox="20 135 140 130" style="left:20px;top:135px">
<defs><linearGradient id="cf" x1="0" y1="0" x2="0" y2="1"><stop offset="0" stop-color="#fdfdfd"/><stop offset=".45" stop-color="#f3f3f3"/><stop offset="1" stop-color="#e2e2e2"/></linearGradient></defs>
<path d="M45.2,242.6L108.4,246.2" stroke="#c2c2c2" stroke-width="3.2" stroke-linecap="round" fill="none"/>
<path d="M114.6,151.4L116.600,152.400L117.400,201.700L109.400,244.600L108.2,244.600L115.900,201.500Z" fill="#ececec" stroke="#d2d2d2" stroke-width=".8"/>
<path d="M35.2,196.600L115.900,201.500L108.2,244.600L44.400,240.800Z" fill="url(#cf)" stroke="#c9c9c9" stroke-width="1.400" stroke-linejoin="round"/>
<path d="M49,148.2L114.600,151.400L116.2,201.500L35.2,196.600Z" fill="#fefefe" stroke="#c9c9c9" stroke-width="1.400" stroke-linejoin="round"/>
</svg>
<div class="cubetx" style="transform:matrix3d(-0.8147385,-0.03037562,0,6.424623e-05,0.259808,-0.1203776,0,0.002467784,0,0,1,0,116.9,200.8,0,1)"><span style="left:49.5px;top:49.7px">SHORA</span></div>
<div class="cubetx" style="transform:matrix3d(0.8068248,0.04769547,0,-1.511313e-06,0.2096032,1.078812,0,0.00264872,0,0,1,0,35.2,196.7,0,1)"><span style="left:51.5px;top:50.6px">ZEZADU</span></div>
<div class="nav" style="top:278.0px"></div>
<div class="nav" style="top:330.7px"></div>
<div class="nav" style="top:383.2px"></div>
<div class="nav" style="top:435.8px"></div>
<div class="nav" style="top:487.9px"></div>
<svg id="navico" width="70" height="270" viewBox="10 270 70 270" style="left:10px;top:270px">
<g fill="none" stroke="#aeaeae" stroke-width="1.600" stroke-linejoin="miter">
<path d="M35.4,299.200L44,290L52.600,299.200H50.200V307.200H46.500V301.800H41.500V307.200H37.800V299.200Z"/>
<path d="M35.300,348.800V343.600H40.300M47.300,343.600H52.300V348.800M52.300,355.200V360.400H47.300M40.300,360.400H35.300V355.200"/>
<path d="M36,404.200H51.600M43.800,396.400V412" stroke-width="2.300" stroke="#a6a6a6"/>
<path d="M34.800,456.800H53" stroke-width="2.400" stroke="#a6a6a6"/>
<path d="M43.500,498.300L50.400,502.200V512.200L43.500,519.300L36.700,512.200V502.200ZM36.700,502.200L43.500,506.800L50.400,502.200M43.500,506.800V519.300" stroke-width="1.300"/>
<path d="M31.800,508.800L43.500,519.800L55.200,508.400" stroke-width="1.500"/>
</g></svg>
<div id="set">Nastavení</div>
<div id="krok">Krok</div>
<div id="step">1,0 mm<i></i></div>
<div id="rstrip"></div>
<div id="tab"><svg width="18" height="58" viewBox="0 0 18 58"><path d="M5.600,16l7.400,13.400l-7.400,13.400" fill="none" stroke="#0c0c0c" stroke-width="2.100"/></svg></div>
<div id="bot"><i></i></div>
</div>
</body>
</html>
